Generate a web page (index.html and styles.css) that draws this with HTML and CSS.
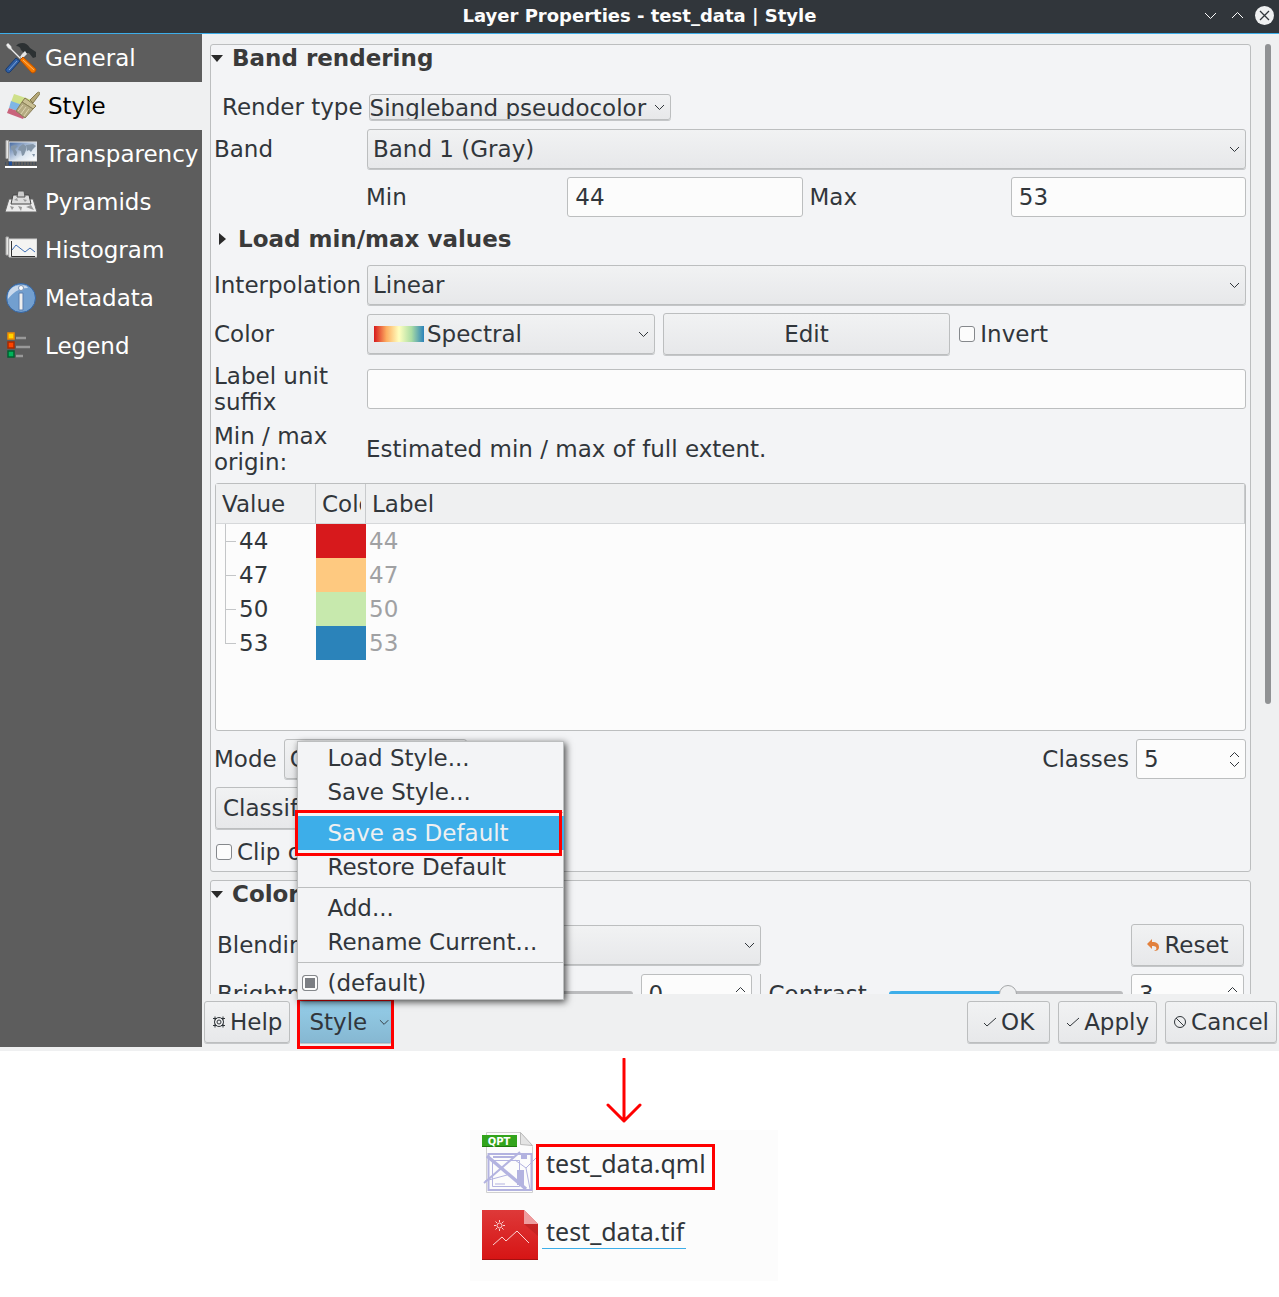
FILE: index.html
```html
<!DOCTYPE html>
<html lang="en">
<head>
<meta charset="utf-8">
<title>Layer Properties - test_data | Style</title>
<link rel="stylesheet" href="styles.css">
</head>
<body>
<div class="window">
  <header class="titlebar">
    <h1>Layer Properties - test_data | Style</h1>
    <div class="window-buttons">
      <button aria-label="Minimize"><svg width="19" height="19" viewBox="0 0 19 19"><path d="M4 7l5.500 5.500L15 7" fill="none" stroke="#fcfcfc"/></svg></button>
      <button aria-label="Maximize"><svg width="19" height="19" viewBox="0 0 19 19"><path d="M4 12l5.500-5.500L15 12" fill="none" stroke="#fcfcfc"/></svg></button>
      <button aria-label="Close"><svg width="19" height="19" viewBox="0 0 19 19"><circle cx="9.500" cy="9.500" r="9.500" fill="#eff0f1"/><path d="M5 5l9 9M14 5l-9 9" stroke="#31363b" stroke-width="1.300"/></svg></button>
    </div>
  </header>
  <div class="content">
    <nav class="sidebar">
      <a href="#general">
        <svg width="32" height="32" viewBox="0 0 32 32"><path d="M13 2c5-2 9-1 12 4l6 4 0 5-3 1-4-5-5 0-3-3c-1-3-2-4-5-4z" fill="#2c3133"/><path d="M17 12l3-3 2 3-5 5-2-2z" fill="#e6e6e6"/><path d="M1 3l2-2 3 3 1 3 9 9-1 1-9-9-3-2z" fill="#eee" stroke="#999" stroke-width=".500"/><path d="M11 16l4 3L5 30c-2 2-5-1-4-3z" fill="#2f5fa5" stroke="#173a70"/><path d="M12 19L4 28" stroke="#7da3d9"/><path d="M15 18l3-3 13 12c0 2-1 4-4 4z" fill="#f57900" stroke="#b85000"/><path d="M18 18l11 10" stroke="#ffb566"/></svg>
        General</a>
      <a href="#style" class="current">
        <svg width="35" height="32" viewBox="0 0 35 32"><path d="M9 4l18 6-3 7L6 12z" fill="#cfe08a"/><path d="M6 11l17 6-2 7L4 18z" fill="#7fb6e6"/><path d="M4 18l17 6-3 5L2 23z" fill="#c9647c"/><path d="M25 10l7-7c2-2 4 0 2 2l-6 8z" fill="#b5a878" stroke="#85794e"/><path d="M20 8l11 8-3 3-11-7z" fill="#c9bf93" stroke="#85794e"/><path d="M17 12l11 7-8 9-9-7z" fill="#b5ab82" stroke="#8a8058"/><path d="M18 15l-5 6M21 17l-5 7M24 19l-5 7" stroke="#ddd5b0"/></svg>
        Style</a>
      <a href="#transparency">
        <svg width="32" height="32" viewBox="0 0 32 32"><defs><linearGradient id="sky" x2="1" y2="1"><stop stop-color="#41669f"/><stop offset=".6" stop-color="#dce6f0"/><stop offset="1" stop-color="#fff"/></linearGradient></defs><path d="M4 4h28v19H4z" fill="url(#sky)" stroke="#e4e4e4"/><path d="M6 8l4-1 3 1-3 3 2 3-1 4-2-1-1-4-2-2zM14 9l4-3 3 2 0 4-2 5-2 1-1-5-3-1zM21 7l7-1 3 2-3 3-2 3-2-2-2 1zM27 16l3 0-1 3z" fill="#8496a8"/><path d="M1 2.500h2.500v18H1z" fill="#e8e8e6" stroke="#aaa"/><path d="M0 29h32" stroke="#fff" stroke-width="2"/><path d="M0 25.500h32" stroke="#46505c" stroke-width="3" stroke-dasharray="1 2"/><path d="M4 23.500h3v4H4z" fill="#214f99"/></svg>
        Transparency</a>
      <a href="#pyramids">
        <svg width="32" height="32" viewBox="0 0 32 32"><path d="M4 13h24l4 13H0z" fill="#ececec" stroke="#666"/><path d="M8 9h16l2 9H6z" fill="#ddd" stroke="#444"/><path d="M13 5h6l1 6h-8z" fill="#ccc" stroke="#555"/><path d="M5 20l4 1-2 3zM13 20l4 1-1 4zM21 21l5-2 3 5-3-1zM9 14l3-2 1 3zM18 13l4 1-2 2z" fill="#999"/></svg>
        Pyramids</a>
      <a href="#histogram">
        <svg width="32" height="32" viewBox="0 0 32 32"><path d="M4 5h28v18H4z" fill="#f4f4f2" stroke="#ccc"/><path d="M1 3h2.500v18H1z" fill="#e8e8e6" stroke="#aaa"/><path d="M6.500 7v15.500H30" fill="none" stroke="#333"/><path d="M7 16l4-5 9 7 5-4 5 4" fill="none" stroke="#3f6fb5"/></svg>
        Histogram</a>
      <a href="#metadata">
        <svg width="32" height="32" viewBox="0 0 32 32"><circle cx="16" cy="16" r="14.500" fill="#729fcf" stroke="#3465a4"/><path d="M3 17C2 8 8 3 16 3c4 0 6 1 7 3C13 6 8 11 3 17z" fill="#c9d9ec"/><circle cx="16" cy="6" r="2.500" fill="#fff" stroke="#7a93b5"/><path d="M14 11h4v17h-4z" fill="#eee" stroke="#5a7fb0"/></svg>
        Metadata</a>
      <a href="#legend">
        <svg width="32" height="32" viewBox="0 0 32 32"><g stroke-width="1.500"><path d="M3 3h6v6H3z" fill="#ffd500" stroke="#f08c00"/><path d="M3 12h6v6H3z" fill="#ff4500" stroke="#a82a00"/><path d="M3 21h6v6H3z" fill="#00b45a" stroke="#00602f"/></g><path d="M11 8h10M11 17h14M11 26h7" stroke="#999" stroke-width="2.500"/></svg>
        Legend</a>
    </nav>
    <main class="main">
      <div class="scroll-view">
        <div class="groups">
          <section class="group">
            <h2><span class="arrow-down"></span>Band rendering</h2>
            <div class="render-type">
              <label for="render">Render type</label>
              <select id="render" class="control compact"><option>Singleband pseudocolor</option></select>
            </div>
            <div class="form">
              <label for="band">Band</label>
              <select id="band" class="control"><option>Band 1 (Gray)</option></select>
              <div class="min-max">
                <label for="min">Min</label><input id="min" class="control" type="text" value="44">
                <label for="max">Max</label><input id="max" class="control" type="text" value="53">
              </div>
              <h3><span class="arrow-right"></span>Load min/max values</h3>
              <label for="interp">Interpolation</label>
              <select id="interp" class="control"><option>Linear</option></select>
              <label for="color">Color</label>
              <div class="thirds">
                <select id="color" class="control ramp"><option>Spectral</option></select>
                <button class="control">Edit</button>
                <label class="check"><input type="checkbox">Invert</label>
              </div>
              <label for="suffix">Label unit suffix</label>
              <input id="suffix" class="control" type="text">
              <span>Min / max origin:</span>
              <span>Estimated min / max of full extent.</span>
            </div>
            <div class="classes-view control">
              <table>
                <thead><tr><th class="col-value">Value</th><th class="col-color"><div>Color</div></th><th>Label</th></tr></thead>
                <tbody>
                  <tr><td class="tree">44</td><td class="swatch red"></td><td class="muted">44</td></tr>
                  <tr><td class="tree">47</td><td class="swatch orange"></td><td class="muted">47</td></tr>
                  <tr><td class="tree">50</td><td class="swatch green"></td><td class="muted">50</td></tr>
                  <tr><td class="tree last">53</td><td class="swatch blue"></td><td class="muted">53</td></tr>
                </tbody>
              </table>
            </div>
            <div class="row">
              <label for="mode">Mode</label>
              <select id="mode" class="control mode"><option>Continuous</option></select>
              <label for="classes" class="push">Classes</label>
              <input id="classes" class="control spin" type="number" value="5">
            </div>
            <div class="row"><button class="control">Classify</button></div>
            <div class="row"><label class="check"><input type="checkbox">Clip out of range</label></div>
          </section>
          <section class="group">
            <h2><span class="arrow-down"></span>Color rendering</h2>
            <div class="color-grid">
              <label for="blend">Blending mode</label>
              <select id="blend" class="blend"><option></option></select>
              <button class="reset"><svg width="14" height="14" viewBox="0 0 14 14"><path d="M1 6l5-5v3c5 0 7 2 7 5s-2 4-5 4c2-1 3-2 2-4-1-1-2-1-4-1v3z" fill="#e2803c"/></svg>Reset</button>
              <label for="bright">Brightness</label>
              <input id="bright" type="range" value="0">
              <input class="spin" type="number" value="0" aria-label="Brightness value">
              <span class="divider"></span>
              <label for="contrast">Contrast</label>
              <input id="contrast" class="half" type="range" value="51">
              <input class="spin" type="number" value="3" aria-label="Contrast value">
            </div>
          </section>
        </div>
        <div class="scrollbar"></div>
      </div>
      <footer class="actions">
        <button><svg width="14" height="14" viewBox="0 0 14 14"><g fill="none" stroke="#31363b"><circle cx="7" cy="7" r="4.500"/><circle cx="7" cy="7" r="2"/><path d="M1 3.500h4M9 3.500h4M1 10.500h4M9 10.500h4M3 1.500v4M11 1.500v4M3 8.500v4M11 8.500v4"/></g></svg>Help</button>
        <div class="style-menu">
          <button class="style-button">Style<svg width="11" height="7" viewBox="0 0 11 7"><path d="M1 1l4.500 4.500L10 1" fill="none" stroke="#31363b"/></svg></button>
          <span class="callout on-button"></span>
          <ul class="menu">
            <li><button>Load Style...</button></li>
            <li><button>Save Style...</button></li>
            <li class="sep"></li>
            <li class="highlight"><button>Save as Default</button><span class="callout on-item"></span></li>
            <li><button>Restore Default</button></li>
            <li class="sep"></li>
            <li><button>Add...</button></li>
            <li><button>Rename Current...</button></li>
            <li class="sep"></li>
            <li><label><input type="checkbox" checked>(default)</label></li>
          </ul>
        </div>
        <button class="push ok"><svg width="14" height="14" viewBox="0 0 14 14"><path d="M1 8l3 3 9-8" fill="none" stroke="#31363b"/></svg>OK</button>
        <button><svg width="14" height="14" viewBox="0 0 14 14"><path d="M1 8l3 3 9-8" fill="none" stroke="#31363b"/></svg>Apply</button>
        <button><svg width="14" height="14" viewBox="0 0 14 14"><g fill="none" stroke="#31363b"><circle cx="7" cy="7" r="5.500"/><path d="M3 3l8 8"/></g></svg>Cancel</button>
      </footer>
    </main>
  </div>
</div>
<section class="result">
  <svg class="arrow" width="36" height="66" viewBox="0 0 36 66"><path d="M18 1v62M2 47l16 16 16-16" fill="none" stroke="#f00" stroke-width="3" stroke-linecap="round" stroke-linejoin="round"/></svg>
  <ul class="files">
    <li>
      <svg width="56" height="64" viewBox="0 0 56 64"><path d="M4.500 2.500h34l12 14v46h-46z" fill="#fcfcfc" stroke="#d0d0d0"/><path d="M38.500 2.500v12l12 1z" fill="#e4e4e4" stroke="#bbb"/><g fill="none" stroke="#b3b3e0"><path d="M6.500 24h43v36h-43z" stroke-width="2"/><path d="M10.500 30.500h27v26h-27z"/><path d="M11 27h21" stroke-width="2"/><path d="M5 26l39 33" stroke-width="3.500"/><path d="M2 53L38 22" stroke-width="2"/><path d="M3 51l22-6M33 30l11 8 10-10M44 38l4 21M13 54h10"/></g><path d="M35 40h7v15h-7zM39 25h6v4h-6z" fill="#b3b3e0"/><path d="M0 5h35v12H0z" fill="#32a41c"/><path d="M0 16h35v1H0z" fill="#1d7a0c"/><text x="17" y="15" text-anchor="middle" class="badge">QPT</text></svg>
      <a href="#qml" class="boxed">test_data.qml</a>
    </li>
    <li>
      <svg width="56" height="50" viewBox="0 0 56 50"><defs><linearGradient id="tif" x2="0" y2="1"><stop stop-color="#de3939"/><stop offset="1" stop-color="#d61414"/></linearGradient></defs><path d="M0 0h42l14 14v36H0z" fill="url(#tif)"/><path d="M42 14h14v12z" fill="#a81818" opacity=".4"/><path d="M42 0l14 14H42z" fill="#ee9c9e"/><path d="M0 49.500h56" stroke="#a31010"/><g fill="none" stroke="#fbd5d5"><path d="M11 35l9-8 4 4 11-10 12 12"/><circle cx="17.500" cy="15.500" r="2.500"/><path d="M17.500 10v2M17.500 19v2M12 15.500h2M21 15.500h2M13.500 11.500l1.500 1.500M20 18l1.500 1.500M21.500 11.500L20 13M15 18l-1.500 1.500"/></g></svg>
      <a href="#tif" class="linked">test_data.tif</a>
    </li>
  </ul>
</section>
</body>
</html>
```
FILE: styles.css
```css
:root {
  --text: #31363b;
  --line: #bcbebf;
  --base: #eff0f1;
  --panel: #f3f4f6;
  --field: #fcfcfc;
  --blue: #3daee9;
  --chevron: url("data:image/svg+xml,%3Csvg xmlns='http://www.w3.org/2000/svg' width='11' height='7'%3E%3Cpath d='M1 1l4.500 4.500L10 1' fill='none' stroke='%2331363b'/%3E%3C/svg%3E");
  --spin: url("data:image/svg+xml,%3Csvg xmlns='http://www.w3.org/2000/svg' width='11' height='17'%3E%3Cpath d='M1 6l4.500-4.500L10 6M1 11l4.500 4.500L10 11' fill='none' stroke='%2331363b'/%3E%3C/svg%3E");
}

* { box-sizing: border-box; }

body {
  margin: 0;
  background: #fff;
  color: var(--text);
  font: 23px/26px "DejaVu Sans", sans-serif;
}

button, input, select { font: inherit; color: inherit; margin: 0; }
h1, h2, h3, ul { margin: 0; padding: 0; }
ul { list-style: none; }
a { color: inherit; text-decoration: none; }

/* Title bar */
.titlebar {
  display: grid;
  grid-template-columns: 1fr auto 1fr;
  align-items: center;
  height: 34px;
  padding: 0 5px 2px;
  background: #31363b;
  border-bottom: 1px solid var(--blue);
}
.titlebar h1 { grid-column: 2; color: #fcfcfc; font-size: 18px; line-height: 30px; }
.window-buttons { display: flex; justify-content: flex-end; gap: 8px; }
.window-buttons button { height: 19px; padding: 0; border: 0; background: none; box-shadow: none; }

/* Page layout */
.window { background: var(--base); }
.content { display: grid; grid-template-columns: 202px minmax(0, 1fr); }
.sidebar { margin-bottom: 4px; background: #5d5d5d; color: #fff; }
.sidebar a { display: flex; align-items: center; gap: 8px; height: 48px; padding-left: 5px; }
.sidebar svg { flex: none; }
.sidebar .current { background: var(--base); color: #000; }
.scroll-view {
  display: flex;
  gap: 14px;
  height: 960px;
  padding: 10px 8px 0;
  overflow: hidden;
}
.groups { flex: 1; min-width: 0; }
.scrollbar { width: 6px; height: 660px; border-radius: 3px; background: #909294; }

/* Groups */
.group {
  padding: 0 4px 4px 3px;
  margin-bottom: 8px;
  border: 1px solid var(--line);
  border-radius: 3px;
  background: var(--panel);
}
h2, h3 { display: flex; align-items: center; font-size: 23px; line-height: 26px; color: #3a3a3a; }
h2 { gap: 9px; }
h3 { gap: 12px; grid-column: 1 / -1; padding: 1px 0 5px 5px; }
.arrow-down { border: 6px solid transparent; border-top: 7px solid #2a2a2a; border-bottom: 0; margin-left: -3px; }
.arrow-right { border: 6px solid transparent; border-left: 7px solid #2a2a2a; border-right: 0; }

/* Controls */
.control { margin-left: 1px; }
select, button {
  min-width: 0;
  height: 40px;
  border: 1px solid var(--line);
  border-radius: 3px;
  background: linear-gradient(#f1f2f3, #e7e8ea);
  box-shadow: 0 1px 0 #c4c6c8;
}
button { display: flex; align-items: center; justify-content: center; gap: 4px; height: 42px; padding: 0 7px; }
select {
  appearance: none;
  padding: 0 24px 0 5px;
  background: var(--chevron) right 5px center no-repeat, linear-gradient(#f1f2f3, #e7e8ea);
}
input[type="text"], input[type="number"] {
  min-width: 0;
  height: 40px;
  padding: 0 7px;
  border: 1px solid var(--line);
  border-radius: 3px;
  background: var(--field);
}
input[type="number"] { appearance: textfield; background: var(--spin) right 5px center no-repeat var(--field); }
input::-webkit-inner-spin-button { display: none; }
.spin { width: 110px; }
input[type="checkbox"] {
  appearance: none;
  width: 16px;
  height: 16px;
  border: 1px solid #85888c;
  border-radius: 3px;
  background: var(--field);
}
.check { display: flex; align-items: center; gap: 5px; min-height: 30px; padding-left: 2px; }
input[type="range"] { appearance: none; width: 100%; height: 40px; margin: 0; background: none; }
input[type="range"]::-webkit-slider-runnable-track { height: 6px; border-radius: 3px; background: #bbbcbe; }
input.half[type="range"]::-webkit-slider-runnable-track { background: linear-gradient(90deg, var(--blue) 51%, #bbbcbe 51%); }
input[type="range"]::-webkit-slider-thumb {
  appearance: none;
  width: 18px;
  height: 18px;
  margin-top: -6px;
  border: 1px solid #a5a7a9;
  border-radius: 9px;
  background: var(--base);
}

/* Band rendering */
.render-type { display: flex; align-items: center; gap: 5px; margin: 23px 0 9px; padding-left: 8px; }
.compact { height: 26px; padding: 0 23px 0 0; }
.form { display: grid; grid-template-columns: 146px minmax(0, 1fr); align-items: center; gap: 8px 6px; }
.min-max {
  grid-column: 2;
  display: grid;
  grid-template-columns: 9fr 11fr 9fr 11fr;
  align-items: center;
  gap: 7px;
}
.thirds { display: grid; grid-template-columns: repeat(3, minmax(0, 1fr)); align-items: center; gap: 7px; }
.ramp {
  padding-left: 59px;
  background:
    var(--chevron) right 5px center no-repeat,
    linear-gradient(90deg, #d7191c, #fdae61 25%, #ffffbf 50%, #abdda4 75%, #2b83ba) 6px center / 50px 16px no-repeat,
    linear-gradient(#f1f2f3, #e7e8ea);
}
.classes-view {
  height: 248px;
  margin-top: 8px;
  border: 1px solid var(--line);
  border-radius: 3px;
  background: var(--field);
}
table { width: 100%; border-collapse: separate; border-spacing: 0; table-layout: fixed; }
th {
  height: 40px;
  padding: 0 4px 0 6px;
  border-right: 1px solid #c8cacc;
  border-bottom: 1px solid #d6d8da;
  background: var(--base);
  font-weight: normal;
  text-align: left;
}
th div { overflow: hidden; }
.col-value { width: 100px; }
.col-color { width: 50px; }
td { height: 34px; padding: 0 3px; }
.tree {
  padding-left: 23px;
  background:
    linear-gradient(#c4c6c8, #c4c6c8) 9px 0 / 1px 100% no-repeat,
    linear-gradient(#c4c6c8, #c4c6c8) 9px 50% / 11px 1px no-repeat;
}
.last {
  background:
    linear-gradient(#c4c6c8, #c4c6c8) 9px 0 / 1px 50% no-repeat,
    linear-gradient(#c4c6c8, #c4c6c8) 9px 50% / 11px 1px no-repeat;
}
.muted { color: #a0a1a3; }
.red { background: #d7191c; }
.orange { background: #fec980; }
.green { background: #c7e9ad; }
.blue { background: #2b83ba; }
.row { display: flex; align-items: center; gap: 6px; margin-top: 8px; }
.mode { width: 183px; }
.push { margin-left: auto; }

/* Color rendering */
.color-grid {
  display: grid;
  grid-template-columns: 173px minmax(0, 1fr) 111px 1px 112px minmax(0, 1fr) 113px;
  align-items: center;
  gap: 8px;
  margin-top: 17px;
  padding: 0 2px 0 3px;
  white-space: nowrap;
}
.blend { grid-column: 2 / 5; }
.reset { grid-column: 7; }
.color-grid .spin { width: 100%; }
.divider { align-self: stretch; background: var(--line); }

/* Dialog buttons */
.actions { display: flex; gap: 8px; padding: 7px 2px 8px; }
.ok { min-width: 83px; }
.style-menu { position: relative; }
.style-button {
  justify-content: flex-start;
  width: 95px;
  gap: 12px;
  padding: 0 3px 0 10px;
  background: linear-gradient(#94cde8, #86b8d2);
  border-color: #7fb0c9;
}
.menu {
  position: absolute;
  left: -1px;
  bottom: 43px;
  width: 267px;
  background: var(--panel);
  outline: 1px solid var(--line);
  outline-offset: -1px;
  box-shadow: 2px 2px 7px rgba(0, 0, 0, .7);
}
.menu li { position: relative; }
.menu button, .menu label {
  display: flex;
  align-items: center;
  justify-content: flex-start;
  width: 100%;
  height: 34px;
  padding: 0 0 0 30px;
  border: 0;
  border-radius: 0;
  background: none;
  box-shadow: none;
}
.menu label { gap: 9px; padding-left: 5px; }
.menu input { box-shadow: inset 0 0 0 2px var(--field); background: #7b7e83; }
.menu .sep { height: 7px; padding: 3px 0; background: var(--line) content-box; }
.menu .highlight { background: var(--blue); color: var(--base); }
.callout { position: absolute; border: 3px solid #f00; pointer-events: none; }
.on-button { inset: -3px -1px -6px; }
.on-item { inset: -6px 2px -6px -2px; z-index: 1; }

/* Saved files */
.result { display: flex; flex-direction: column; align-items: center; padding: 7px 31px 0 0; }
.files {
  display: flex;
  flex-direction: column;
  gap: 16px;
  width: 308px;
  margin-top: 6px;
  padding: 0 12px 21px;
  background: var(--field);
  font: 25px/32px "Noto Sans", sans-serif;
}
.files li { display: flex; align-items: flex-end; }
.files .boxed { margin: 0 0 4px -2px; padding: 0 6px 8px 7px; border: 3px solid #f00; }
.files .linked { margin: 0 0 11px 4px; padding: 0 2px 1px 4px; border-bottom: 1px solid var(--blue); }
.badge { fill: #fff; font: bold 10px "DejaVu Sans", sans-serif; }
```
